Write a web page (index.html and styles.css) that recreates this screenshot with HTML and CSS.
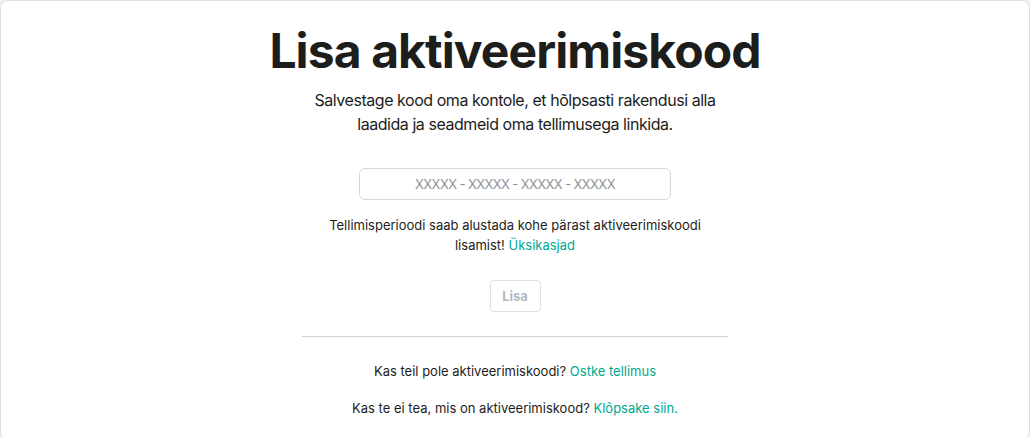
FILE: index.html
```html
<!DOCTYPE html>
<html lang="et">
<head>
<meta charset="utf-8">
<title>Lisa aktiveerimiskood</title>
<link rel="stylesheet" href="styles.css">
</head>
<body>
<main class="card">
  <section class="content">
    <h1 class="title">Lisa aktiveerimiskood</h1>
    <p class="lead">Salvestage kood oma kontole, et hõlpsasti rakendusi alla laadida ja seadmeid oma tellimusega linkida.</p>
    <input class="code-input" type="text" placeholder="XXXXX - XXXXX - XXXXX - XXXXX">
    <p class="note">Tellimisperioodi saab alustada kohe pärast aktiveerimiskoodi lisamist! <a href="#" class="link">Üksikasjad</a></p>
    <button class="btn" disabled>Lisa</button>
    <hr class="divider">
    <p class="foot">Kas teil pole aktiveerimiskoodi? <a href="#" class="link">Ostke tellimus</a></p>
    <p class="foot">Kas te ei tea, mis on aktiveerimiskood? <a href="#" class="link">Klõpsake siin.</a></p>
  </section>
</main>
</body>
</html>
```
FILE: styles.css
```css
* { box-sizing: border-box; }
html, body { margin: 0; padding: 0; }
body {
  background: #eef0f3;
  font-family: Inter, "Noto Sans", sans-serif;
  color: #1d1d1b;
}
.card {
  background: #fff;
  border: 1px solid #dde0e5;
  border-radius: 8px;
  min-height: 440px;
  display: flex;
  justify-content: center;
}
.content {
  width: 426px;
  display: flex;
  flex-direction: column;
  align-items: center;
  text-align: center;
  padding-top: 22px;
}
.title {
  margin: 0;
  font-size: 48px;
  line-height: 56px;
  font-weight: 700;
  letter-spacing: -0.9px;
  white-space: nowrap;
  color: #1d1d1b;
}
.lead {
  margin: 9px 0 0;
  width: 410px;
  font-size: 16px;
  line-height: 24px;
  letter-spacing: -0.45px;
}
.code-input {
  margin-top: 32px;
  width: 312px;
  height: 32px;
  border: 1px solid #d5d8dd;
  border-radius: 6px;
  text-align: center;
  font-family: inherit;
  font-size: 13px;
  letter-spacing: -0.6px;
  color: #1d1d1b;
  outline: none;
}
.code-input::placeholder { color: #909397; }
.note {
  margin: 15px 0 0;
  width: 380px;
  font-size: 13px;
  line-height: 20px;
}
.link { color: #00a88e; text-decoration: none; }
.btn {
  margin-top: 25px;
  width: 51px;
  height: 32px;
  border: 1px solid #dfe1e5;
  border-radius: 4px;
  background: #fff;
  color: #b4b8bf;
  font-family: inherit;
  font-size: 13px;
  font-weight: 700;
}
.divider {
  width: 426px;
  margin: 24px 0 0;
  border: 0;
  border-top: 1px solid #d3d3d3;
}
.foot {
  margin: 24px 0 0;
  font-size: 13px;
  line-height: 20px;
}
.foot + .foot { margin-top: 17px; }
```
